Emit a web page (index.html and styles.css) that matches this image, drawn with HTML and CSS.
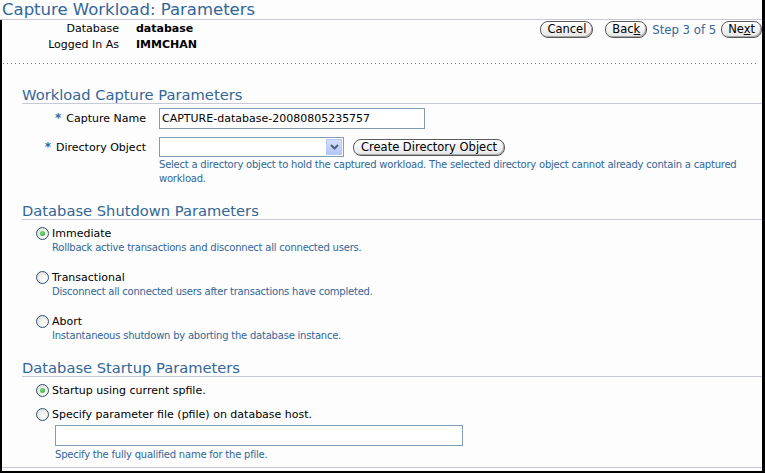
FILE: index.html
```html
<!DOCTYPE html>
<html>
<head>
<meta charset="utf-8">
<title>Capture Workload: Parameters</title>
<link rel="stylesheet" href="styles.css">
</head>
<body>
<div class="page">
  <div class="title">Capture Workload: Parameters</div>
  <div class="frame">
    <div class="header">
      <div class="info">
        <span class="ilabel">Database</span><span class="ival">database</span>
        <span class="ilabel">Logged In As</span><span class="ival">IMMCHAN</span>
      </div>
      <div class="nav">
        <button class="btn cancel">Cancel</button>
        <button class="btn">Bac<u>k</u></button>
        <span class="step">Step 3 of 5</span>
        <button class="btn">Ne<u>x</u>t</button>
      </div>
    </div>
    <div class="dots"></div>

    <h2 class="sec first">Workload Capture Parameters</h2>
    <div class="form">
      <label class="flabel name"><span class="req">*</span>Capture Name</label>
      <div class="field"><input class="text" type="text" value="CAPTURE-database-20080805235757"></div>
      <label class="flabel dir"><span class="req">*</span>Directory Object</label>
      <div class="field">
        <div class="selrow">
          <div class="select"><span class="arrow"><svg width="9" height="6" viewBox="0 0 9 6"><path d="M1 1 L4.5 4.5 L8 1" fill="none" stroke="#4d6185" stroke-width="2"/></svg></span></div>
          <button class="btn create">Create Directory Object</button>
        </div>
        <div class="help">Select a directory object to hold the captured workload. The selected directory object cannot already contain a captured workload.</div>
      </div>
    </div>

    <h2 class="sec">Database Shutdown Parameters</h2>
    <div class="opts">
      <div class="opt"><span class="radio on"></span><span>Immediate</span></div>
      <div class="ohelp">Rollback active transactions and disconnect all connected users.</div>
      <div class="opt next"><span class="radio"></span><span>Transactional</span></div>
      <div class="ohelp">Disconnect all connected users after transactions have completed.</div>
      <div class="opt next"><span class="radio"></span><span>Abort</span></div>
      <div class="ohelp">Instantaneous shutdown by aborting the database instance.</div>
    </div>

    <h2 class="sec">Database Startup Parameters</h2>
    <div class="opts">
      <div class="opt"><span class="radio on"></span><span>Startup using current spfile.</span></div>
      <div class="opt near"><span class="radio"></span><span>Specify parameter file (pfile) on database host.</span></div>
      <input class="text pfile" type="text" value="">
      <div class="phelp">Specify the fully qualified name for the pfile.</div>
    </div>

    <div class="footline"></div>
  </div>
</div>
</body>
</html>
```

FILE: styles.css
```css
html, body {
  margin: 0;
  padding: 0;
  background: #fcfdfc;
}
body {
  font-family: "DejaVu Sans", sans-serif;
  font-size: 11px;
  color: #000;
}
.page {
  width: 765px;
  height: 473px;
  box-sizing: border-box;
  border-right: 3px solid #000;
  display: flex;
  flex-direction: column;
}
.title {
  font-size: 16.5px;
  line-height: 19px;
  height: 19px;
  color: #336699;
  padding-left: 2px;
  border-bottom: 1px solid #c6cad6;
  white-space: nowrap;
}
.frame {
  flex: 1;
  border-left: 2px solid #000;
  border-bottom: 2px solid #000;
  display: flex;
  flex-direction: column;
  min-height: 0;
}
.header {
  display: flex;
  justify-content: space-between;
  align-items: flex-start;
  padding-top: 1px;
}
.info {
  display: grid;
  grid-template-columns: 117px auto;
  column-gap: 17px;
  line-height: 16px;
}
.ilabel { text-align: right; }
.ival { font-weight: bold; }
.nav {
  display: flex;
  align-items: center;
}
.btn {
  appearance: none;
  font-family: "DejaVu Sans", sans-serif;
  font-size: 11.5px;
  color: #000;
  height: 17px;
  line-height: 15px;
  padding: 0 6px;
  border: 1px solid #5a5a5a;
  border-radius: 8px;
  background: linear-gradient(#ffffff, #e6e6e6);
  box-shadow: inset -1px -1px 0 #a8a8a8;
  white-space: nowrap;
}
.cancel { margin-right: 12px; }
.step {
  color: #336699;
  font-size: 11.7px;
  margin: 0 5px;
}
.dots {
  height: 1px;
  margin: 10px 3px 0 1px;
  background: repeating-linear-gradient(to right, #5a7fa8 0 1px, transparent 1px 4px);
}
.sec {
  font-size: 14.7px;
  line-height: 17px;
  font-weight: normal;
  color: #336699;
  margin: 16px 0 0 20px;
  border-bottom: 1px solid #c6cad6;
  white-space: nowrap;
}
.sec.first { margin-top: 22px; }
.form {
  display: grid;
  grid-template-columns: 144px 1fr;
  column-gap: 13px;
  row-gap: 8px;
  margin-top: 4px;
  align-items: start;
}
.flabel {
  text-align: right;
  white-space: nowrap;
}
.flabel.name { line-height: 21px; }
.flabel.dir { line-height: 20px; }
.req {
  color: #336699;
  font-weight: bold;
  font-size: 12px;
  margin-right: 5px;
}
.text {
  box-sizing: border-box;
  height: 21px;
  width: 266px;
  border: 1px solid #7f9db9;
  background: #fff;
  font-family: "DejaVu Sans", sans-serif;
  font-size: 11px;
  color: #000;
  padding: 0 2px;
  margin: 0;
  display: block;
}
.selrow {
  display: flex;
  align-items: center;
  gap: 9px;
}
.select {
  box-sizing: border-box;
  width: 185px;
  height: 20px;
  border: 1px solid #7f9db9;
  background: #fff;
  display: flex;
  justify-content: flex-end;
  padding: 1px;
}
.arrow {
  box-sizing: border-box;
  width: 16px;
  height: 16px;
  border: 1px solid #b7c9f2;
  background: linear-gradient(#d3defb, #b3c7f5);
  display: flex;
  align-items: center;
  justify-content: center;
}
.btn.create { padding: 0 7px; }
.help {
  color: #336699;
  font-size: 10px;
  letter-spacing: -0.22px;
  line-height: 14px;
  margin-top: 1px;
  padding-right: 18px;
}
.opts {
  margin: 5px 0 0 34px;
  display: flex;
  flex-direction: column;
  align-items: flex-start;
}
.opt {
  display: flex;
  align-items: center;
  gap: 3px;
  height: 16px;
  white-space: nowrap;
}
.opt.next { margin-top: 14px; }
.opt.near { margin-top: 8px; }
.ohelp, .phelp {
  color: #336699;
  font-size: 10px;
  letter-spacing: -0.22px;
  line-height: 14px;
  margin-left: 16px;
  white-space: nowrap;
}
.radio {
  box-sizing: border-box;
  width: 13px;
  height: 13px;
  border-radius: 50%;
  border: 1px solid #2f5178;
  background: radial-gradient(circle at 65% 65%, #ffffff 0, #f2f2ee 40%, #d6d6d0 100%);
  display: flex;
  align-items: center;
  justify-content: center;
}
.radio.on::after {
  content: "";
  width: 5px;
  height: 5px;
  border-radius: 50%;
  background: radial-gradient(circle at 40% 40%, #7fdc7f, #21a121);
}
.pfile {
  width: 408px;
  margin: 3px 0 0 19px;
}
.phelp {
  margin: 2px 0 0 19px;
}
.footline {
  margin-top: auto;
  margin-bottom: 3px;
  border-top: 1px solid #c6cad6;
}
```
